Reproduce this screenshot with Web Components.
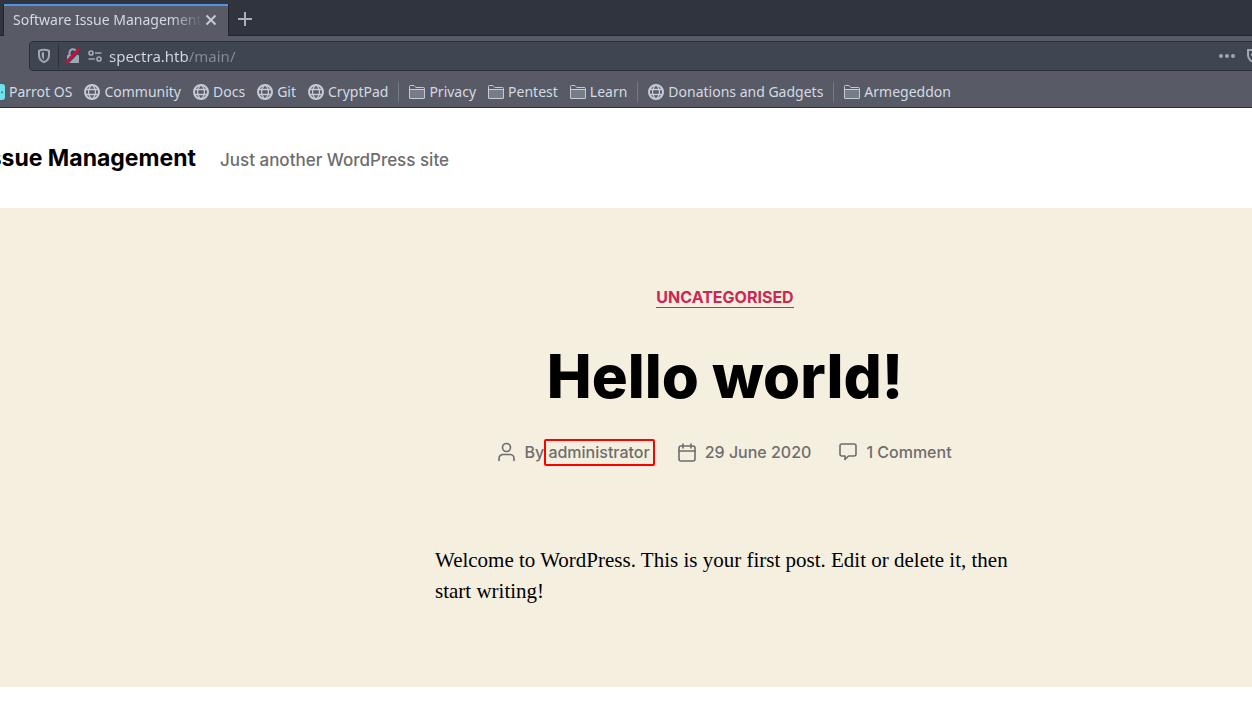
<!DOCTYPE html>
<html lang="en">
<head>
<meta charset="utf-8">
<meta name="viewport" content="width=device-width, initial-scale=1">
<title>Software Issue Management</title>
<style>
  body { margin: 0; background: #fff; overflow-x: hidden; }
</style>
</head>
<body>
<browser-window>
  <browser-tabs slot="tabs" label="Software Issue Management"></browser-tabs>
  <address-bar slot="address" value="spectra.htb/main/"></address-bar>
  <bookmark-bar slot="bookmarks">
    <bookmark-item icon="parrot">Parrot OS</bookmark-item>
    <bookmark-item icon="globe">Community</bookmark-item>
    <bookmark-item icon="globe">Docs</bookmark-item>
    <bookmark-item icon="globe">Git</bookmark-item>
    <bookmark-item icon="globe">CryptPad</bookmark-item>
    <bookmark-divider></bookmark-divider>
    <bookmark-item icon="folder">Privacy</bookmark-item>
    <bookmark-item icon="folder">Pentest</bookmark-item>
    <bookmark-item icon="folder">Learn</bookmark-item>
    <bookmark-divider></bookmark-divider>
    <bookmark-item icon="globe">Donations and Gadgets</bookmark-item>
    <bookmark-divider></bookmark-divider>
    <bookmark-item icon="folder">Armegeddon</bookmark-item>
  </bookmark-bar>
  <site-header>
    <span slot="title">Software Issue Management</span>
    <span slot="tagline">Just another WordPress site</span>
  </site-header>
  <blog-post>
    <span slot="category">Uncategorised</span>
    <span slot="title">Hello world!</span>
    <post-meta slot="meta" author="administrator" date="29 June 2020" comments="1 Comment"></post-meta>
    <span slot="content">Welcome to WordPress. This is your first post. Edit or delete it, then start writing!</span>
  </blog-post>
</browser-window>

<script>
const define = (name, markup, setup) => {
  const template = document.createElement('template');
  template.innerHTML = markup;
  customElements.define(name, class extends HTMLElement {
    constructor() {
      super();
      this.attachShadow({ mode: 'open' }).append(template.content.cloneNode(true));
    }
    connectedCallback() { if (setup) setup(this, this.shadowRoot); }
  });
};

define('browser-window', `
  <style>
    :host { display: block; }
    .chrome { background: #585a66; color: #d3dae3; border-bottom: 1px solid #2b2e39;
      font: 14px/20px "Noto Sans", sans-serif; overflow: hidden; }
  </style>
  <header class="chrome">
    <slot name="tabs"></slot>
    <slot name="address"></slot>
    <slot name="bookmarks"></slot>
  </header>
  <main><slot></slot></main>`);

define('browser-tabs', `
  <style>
    :host { display: flex; box-sizing: border-box; height: 36px; padding: 4px 0 0 3px;
      background: linear-gradient(#22252e, #22252e) bottom / 100% 1px no-repeat #2f343f; }
    .tab { display: flex; align-items: center; box-sizing: border-box; width: 226px; padding: 0 9px;
      background: #585a66; border: solid #22252e; border-width: 0 1px;
      box-shadow: inset 0 2px #5294e2; }
    .label { flex: 1; min-width: 0; white-space: nowrap;
      mask-image: linear-gradient(90deg, #000 calc(100% - 32px), transparent); }
    button { display: flex; align-items: center; justify-content: center; border: 0; padding: 0;
      background: none; color: #c5cbd5; }
    .close { width: 16px; height: 16px; }
    .new { width: 32px; height: 30px; color: #a9b0bb; }
  </style>
  <div class="tab" role="tab" aria-selected="true">
    <span class="label"></span>
    <button class="close" aria-label="Close tab"><svg width="12" height="12" viewBox="0 0 12 12"><path d="M1.500 1.500l9 9m0-9l-9 9" fill="none" stroke="currentColor" stroke-width="2"/></svg></button>
  </div>
  <button class="new" aria-label="New tab"><svg width="14" height="14" viewBox="0 0 14 14"><path d="M7 0v14M0 7h14" fill="none" stroke="currentColor" stroke-width="2"/></svg></button>`,
  (host, root) => { root.querySelector('.label').textContent = host.getAttribute('label'); });

define('address-bar', `
  <style>
    :host { display: block; padding: 5px 0 0 29px; }
    form { display: flex; align-items: center; box-sizing: border-box; height: 30px; margin-right: -32px;
      border: 1px solid #2b2e39; border-radius: 4px; background: #404552; color: #a0a7b3; }
    svg { flex: none; }
    .shield { margin: 0 7px; }
    .rule { width: 1px; height: 22px; background: #2b2e39; }
    .lock { margin: 0 6px; }
    input { flex: 1; min-width: 0; padding: 0; margin: 0 0 0 6px; border: 0; outline: 0; font: inherit; font-size: 15px;
      background: linear-gradient(90deg, #d3dae3 80px, #868c99 80px); background-clip: text; -webkit-background-clip: text;
      color: transparent; }
    button { display: flex; align-items: center; justify-content: center; border: 0; background: none; padding: 0;
      width: 24px; height: 24px; color: #a0a7b3; }
    .pocket { margin: 0 16px 0 4px; }
  </style>
  <form>
    <svg class="shield" width="14" height="16" viewBox="0 0 14 16"><path d="M7 1.800c2 0 3.700.4 5 1v4.400c0 3.500-2 5.700-5 7-3-1.300-5-3.500-5-7V2.800c1.300-.6 3-1 5-1z" fill="none" stroke="currentColor" stroke-width="2"/><path d="M7 4.200c-.9 0-1.700.1-2.300.4v3c0 1.700.8 3 2.300 3.900z" fill="currentColor"/></svg>
    <span class="rule"></span>
    <svg class="lock" width="16" height="16" viewBox="0 0 16 16"><path d="M4.500 7V4.700a3.500 3.500 0 017 0V7" fill="none" stroke="currentColor" stroke-width="2"/><rect x="2" y="7" width="12" height="8" rx="1" fill="currentColor"/><path d="M1.200 15.200L14.600 1.200" stroke="#404552" stroke-width="4"/><path d="M1 14.700L14.200 1" stroke="#ed0038" stroke-width="2"/></svg>
    <svg width="16" height="14" viewBox="0 0 16 14"><g fill="none" stroke="currentColor" stroke-width="1.700"><circle cx="4" cy="4" r="2"/><path d="M8 4h6.500M1.500 10H8"/><circle cx="12" cy="10" r="2"/></g></svg>
    <input aria-label="Address" spellcheck="false">
    <button type="button" aria-label="Page actions"><svg width="16" height="4" viewBox="0 0 16 4"><g fill="currentColor"><circle cx="2" cy="2" r="2"/><circle cx="8" cy="2" r="2"/><circle cx="14" cy="2" r="2"/></g></svg></button>
    <button type="button" class="pocket" aria-label="Save to Pocket"><svg width="18" height="14" viewBox="0 0 18 14"><path d="M2 1h14v5a7 7 0 01-14 0z" fill="none" stroke="currentColor" stroke-width="2"/><path d="M5 5l4 3 4-3" fill="none" stroke="currentColor" stroke-width="2"/></svg></button>
  </form>`,
  (host, root) => { root.querySelector('input').value = host.getAttribute('value'); });

define('bookmark-bar', `
  <style>
    :host { display: block; }
    nav { display: flex; align-items: center; box-sizing: border-box; height: 36px; margin-left: -17px; padding-top: 5px; }
  </style>
  <nav aria-label="Bookmarks"><slot></slot></nav>`);

define('bookmark-divider', `
  <style>:host { display: block; flex: none; width: 1px; height: 20px; margin: 0 4px; background: #747986; }</style>`);

const bookmarkIcons = {
  globe: '<g fill="none" stroke="#c5cbd5"><circle cx="8" cy="8" r="7" stroke-width="2"/><path d="M8 1C5.700 2.700 4.600 5 4.600 8s1.100 5.300 3.400 7c2.300-1.700 3.400-4 3.400-7S10.300 2.700 8 1zM1.500 5.500h13M1.500 10.500h13" stroke-width="1.300"/></g>',
  folder: '<path d="M.5 14V2.500Q.5 1.500 1.500 1.500h3.300l2 2h7.700q1 0 1 1V14q0 .5-.5.5H1Q.5 14.500.5 14z" fill="#767c88" stroke="#c5cbd5"/><path d="M1 2h3.600l2 2h8.400v1.500H1z" fill="#585a66"/><path d="M.5 5.500h15" stroke="#c5cbd5"/>',
  parrot: '<rect width="16" height="16" rx="3" fill="#6fe0f0"/><path d="M12 7l3 1.500-3 1z" fill="#3c8f9e"/>'
};
define('bookmark-item', `
  <style>
    :host { display: block; flex: none; }
    a { display: flex; align-items: center; gap: 4px; padding: 0 6px; color: #d3dae3; text-decoration: none; white-space: nowrap; }
    svg { flex: none; }
  </style>
  <a href="#"><svg width="16" height="16" viewBox="0 0 16 16"></svg><slot></slot></a>`,
  (host, root) => { root.querySelector('svg').innerHTML = bookmarkIcons[host.getAttribute('icon')]; });

define('site-header', `
  <style>
    :host { display: flex; align-items: baseline; box-sizing: border-box; height: 100px; padding-top: 34px;
      font-family: Inter, sans-serif; white-space: nowrap; }
    .name { display: flex; justify-content: flex-end; width: 196px; margin-right: 24px; }
    a { color: #000; text-decoration: none; font-size: 23px; line-height: 32px; font-weight: 700; }
    p { margin: 0; font-size: 17px; line-height: 28px; font-weight: 500; color: #6d6d6d; }
  </style>
  <div class="name"><a href="#"><slot name="title"></slot></a></div>
  <p><slot name="tagline"></slot></p>`);

define('blog-post', `
  <style>
    :host { display: block; box-sizing: border-box; padding: 80px 0 80px 198px; background: #f5efe0; text-align: center;
      font-family: Inter, sans-serif; }
    article { display: flex; flex-direction: column; align-items: center; }
    .category { color: #cd2653; font-size: 16px; line-height: 19px; font-weight: 700; text-transform: uppercase;
      text-decoration: none; border-bottom: 1px solid #cd2653; }
    h1 { margin: 32px 0 0; font-size: 60px; line-height: 72px; font-weight: 800; color: #000; white-space: nowrap; }
    .meta { margin-top: 28px; }
    p { margin: 81px 0 0; width: 580px; max-width: 100%; text-align: left; color: #000;
      font: 21px/31px "Liberation Serif", serif; }
  </style>
  <article>
    <a class="category" href="#"><slot name="category"></slot></a>
    <h1><slot name="title"></slot></h1>
    <div class="meta"><slot name="meta"></slot></div>
    <p><slot name="content"></slot></p>
  </article>`);

define('post-meta', `
  <style>
    :host { display: block; font: 500 16px/24px Inter, sans-serif; color: #6d6d6d; }
    ul { display: flex; gap: 28px; margin: 0; padding: 0; list-style: none; }
    li { display: flex; align-items: center; gap: 9px; white-space: nowrap; }
    a { color: inherit; text-decoration: none; }
    .author { position: relative; }
    .author::after { content: ""; position: absolute; inset: -3px -5px -4px -4px; border: 2px solid #f00; border-radius: 2px; }
    svg { flex: none; }
  </style>
  <ul>
    <li><svg width="17" height="20" viewBox="0 0 17 20"><g fill="none" stroke="currentColor" stroke-width="1.600" stroke-linecap="round"><circle cx="8.500" cy="5.500" r="4"/><path d="M1 18.500v-2a4 4 0 014-4h7a4 4 0 014 4v2"/></g></svg><span>By <a class="author" href="#"></a></span></li>
    <li><svg width="18" height="19" viewBox="0 0 18 19"><g fill="none" stroke="currentColor" stroke-width="1.600" stroke-linecap="round"><rect x="1" y="3" width="16" height="15" rx="2"/><path d="M5 1v4M13 1v4M1 8h16"/></g></svg><a class="date" href="#"></a></li>
    <li><svg width="18" height="18" viewBox="0 0 18 18"><path d="M3 1h12q2 0 2 2v8q0 2-2 2H9.500L6 16.500V13H3q-2 0-2-2V3q0-2 2-2z" fill="none" stroke="currentColor" stroke-width="1.600" stroke-linejoin="round"/></svg><a class="comments" href="#"></a></li>
  </ul>`,
  (host, root) => {
    for (const part of ['author', 'date', 'comments'])
      root.querySelector('.' + part).textContent = host.getAttribute(part);
  });
</script>
</body>
</html>
